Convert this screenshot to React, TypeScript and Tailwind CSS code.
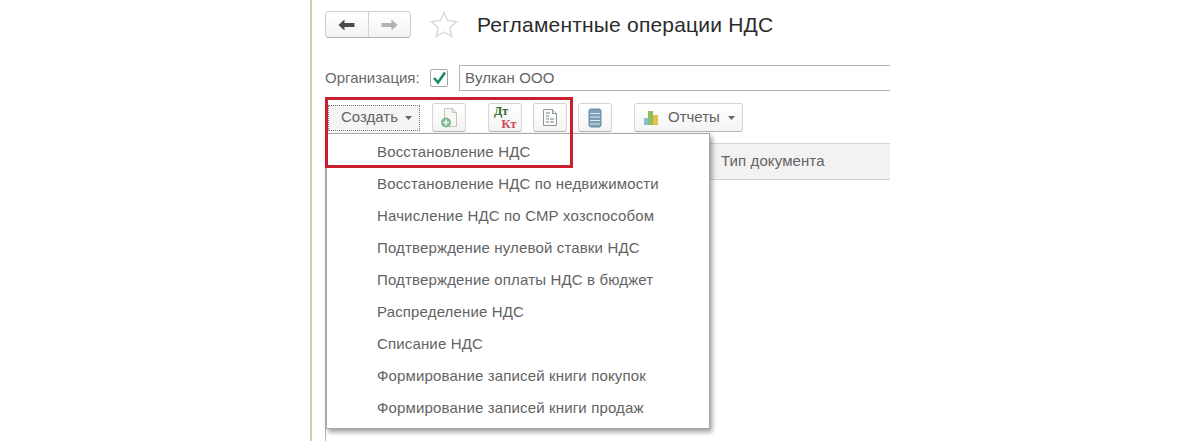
import React from 'react';

const menuItems = [
  'Восстановление НДС',
  'Восстановление НДС по недвижимости',
  'Начисление НДС по СМР хозспособом',
  'Подтверждение нулевой ставки НДС',
  'Подтверждение оплаты НДС в бюджет',
  'Распределение НДС',
  'Списание НДС',
  'Формирование записей книги покупок',
  'Формирование записей книги продаж',
];

const toolButton =
  'flex h-[29px] w-[34px] items-center justify-center rounded-[3px] border border-[#d4d4d4] border-b-[#b4b4b4] bg-gradient-to-b from-white to-[#f4f4f4]';

const Caret = () => (
  <svg width="7" height="4" viewBox="0 0 7 4">
    <path d="M0 0h7L3.5 4z" fill="#666" />
  </svg>
);

const NewDocIcon = () => (
  <svg width="20" height="22" viewBox="0 0 20 22">
    <path d="M5.5 1.5h8l4 4v14h-12z" fill="#f6f6f2" stroke="#c4c4ba" />
    <path d="M13.5 1.5v4h4" fill="#e6e6e0" stroke="#c4c4ba" />
    <circle cx="7" cy="15.5" r="5" fill="#7db78d" />
    <path d="M7 12.5v6M4 15.5h6" stroke="#f4f4f4" strokeWidth="1.6" />
  </svg>
);

const ListDocIcon = () => (
  <svg width="16" height="19" viewBox="0 0 16 19">
    <path d="M1.5 1.5h9l4 4v12h-13z" fill="#fbfbfb" stroke="#8b939b" />
    <path d="M10.5 1.5v4h4" fill="#e2e5e8" stroke="#8b939b" />
    <path d="M4 5h4M4 8h3M4 11h3M8 11h4M4 14h3M8 14h4" stroke="#77818a" />
  </svg>
);

const RegisterIcon = () => (
  <svg width="14" height="20" viewBox="0 0 14 20">
    <rect x="1" y="1" width="12" height="18" rx="2" fill="#7b9fb8" stroke="#6b8ba1" />
    <path d="M2 5.5h10M2 9h10M2 12.5h10M2 16h10" stroke="#dbe7ef" />
  </svg>
);

const ChartIcon = () => (
  <svg width="17" height="16" viewBox="0 0 17 16">
    <rect x="1" y="8" width="4" height="7" fill="#8fbcd9" />
    <rect x="5" y="1" width="5" height="14" fill="#8dbf62" />
    <rect x="10" y="5" width="5" height="10" fill="#e6c04e" />
  </svg>
);

export default function App() {
  return (
    <div
      className="flex h-[441px] w-[1200px] overflow-hidden bg-white pl-[310px] text-[#636363]"
      style={{ fontFamily: '"Liberation Sans", Arial, sans-serif' }}
    >
      <div className="relative w-[580px] border-l-2 border-[#c9d3a3] pl-[13px]">
        {/* Header */}
        <div className="flex h-[50px] items-center pb-[1px]">
          <div className="flex h-[27px] w-[86px] rounded-[4px] border border-[#cfcfcf] border-b-[#b5b5b5] bg-gradient-to-b from-white to-[#f3f3f3]">
            <div className="flex flex-1 items-center justify-center border-r border-[#d2d2d2]">
              <svg width="17" height="12" viewBox="0 0 17 12">
                <path d="M6.5 0.5L0.5 6l6 5.5V8H16.5V4H6.5z" fill="#4a4a4a" />
              </svg>
            </div>
            <div className="flex flex-1 items-center justify-center">
              <svg width="17" height="12" viewBox="0 0 17 12">
                <path d="M10.5 0.5l6 5.5-6 5.5V8H0.5V4h10z" fill="#b4b4b4" />
              </svg>
            </div>
          </div>
          <svg className="ml-[19px]" width="28" height="27" viewBox="0 0 28 27">
            <path
              d="M14 1.5l3.7 8.2 8.8 1-6.6 6 1.9 8.8-7.8-4.5-7.8 4.5 1.9-8.8-6.6-6 8.8-1z"
              fill="#fff"
              stroke="#d6d6d6"
              strokeWidth="1.3"
            />
          </svg>
          <h1 className="ml-[19px] text-[21px] font-normal tracking-[0.2px] text-[#2b2b2b]">Регламентные операции НДС</h1>
        </div>

        {/* Organization */}
        <div className="mt-[15px] flex h-[26px] items-center">
          <span className="w-[105px] text-[15px] text-[#6a6a6a]">Организация:</span>
          <span className="flex h-[18px] w-[18px] items-center justify-center rounded-[2px] border border-[#a9a9a9] bg-white">
            <svg width="15" height="14" viewBox="0 0 15 14">
              <path d="M2 7l4 4.5L13 1.5" fill="none" stroke="#17876a" strokeWidth="2.6" />
            </svg>
          </span>
          <div className="ml-[11px] flex h-[26px] flex-1 items-center border-y border-l border-y-[#b4b4b4] border-l-[#b4b4b4] pl-[5px] text-[15px] tracking-[0.1px]">
            Вулкан ООО
          </div>
        </div>

        {/* Toolbar */}
        <div className="mt-[12px] flex h-[29px] items-center pl-[3px]">
          <button className="flex h-[26px] w-[92px] items-center gap-[7px] border border-dotted border-[#777] bg-[#f4f4f4] pl-[12px] text-[15px]">
            Создать
            <Caret />
          </button>
          <div className={`${toolButton} ml-[12px]`}>
            <NewDocIcon />
          </div>
          <div className={`${toolButton} ml-[22px] flex-col font-bold`} style={{ fontFamily: '"Liberation Serif", serif' }}>
            <span className="-ml-[8px] text-[12px] leading-[12px] text-[#2f6b1e]">Дт</span>
            <span className="ml-[8px] text-[13px] leading-[13px] text-[#d0485a]">Кт</span>
          </div>
          <div className={`${toolButton} ml-[11px]`}>
            <ListDocIcon />
          </div>
          <div className={`${toolButton} ml-[11px]`}>
            <RegisterIcon />
          </div>
          <button className="ml-[22px] flex h-[29px] w-[109px] items-center gap-[8px] rounded-[3px] border border-[#d4d4d4] border-b-[#b4b4b4] bg-gradient-to-b from-white to-[#f4f4f4] pl-[8px] text-[15px]">
            <ChartIcon />
            Отчеты
            <Caret />
          </button>
        </div>

        {/* Table */}
        <div className="mt-[11px] flex h-[298px] flex-col border-l border-[#b9b9b9]">
          <div className="flex h-[37px] items-center border-y border-[#d2d2d2] bg-[#f2f2f2] pl-[395px] text-[15px] tracking-[0.1px]">
            Тип документа
          </div>
        </div>

        {/* Dropdown */}
        <div className="absolute top-[133px] left-[14px] w-[384px] border border-[#a8a8a8] bg-white pt-[2px] pb-[4px] shadow-[2px_3px_5px_rgba(0,0,0,0.4)]">
          {menuItems.map((item) => (
            <div key={item} className="flex h-[32px] items-center pl-[50px] text-[15px] tracking-[0.15px]">
              {item}
            </div>
          ))}
        </div>

        {/* Red highlight */}
        <div className="absolute top-[97px] left-[13px] h-[71px] w-[248px] border-[3px] border-[#c8202f]" />
      </div>
    </div>
  );
}
